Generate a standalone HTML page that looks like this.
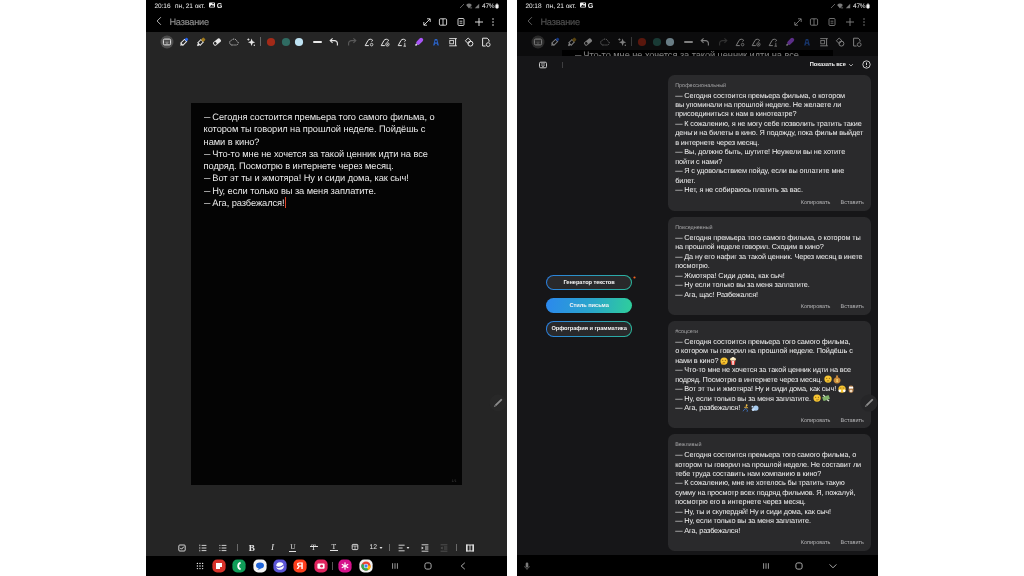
<!DOCTYPE html>
<html lang="ru"><head><meta charset="utf-8"><title>Samsung Notes</title>
<style>
html,body{margin:0;padding:0}
body{width:1024px;height:576px;background:#fff;position:relative;overflow:hidden;font-family:"Liberation Sans", sans-serif;-webkit-font-smoothing:antialiased;text-rendering:geometricPrecision}
.phone{position:absolute;top:0;width:360.8px;height:576px;background:#252525;overflow:hidden;will-change:transform}
.st{position:absolute;font-size:6.5px;line-height:9px;color:#f2f2f2;white-space:nowrap;letter-spacing:-0.03px}
.fm{position:absolute;font-size:8.2px;line-height:10px;color:#e4e4e4;white-space:nowrap}
.card{position:absolute;left:150.8px;width:203.7px;background:#2a2a2c;border-radius:6.5px}
.lbl{position:absolute;left:7.4px;top:8px;font-size:5.45px;line-height:7px;color:#a6a6a8;white-space:nowrap}
.ct{position:absolute;left:7.4px;top:15.9px;font-size:7.3px;line-height:9.45px;color:#f1f1f1;white-space:nowrap;letter-spacing:-0.115px}
.cb{position:absolute;bottom:3.6px;font-size:5.5px;line-height:8px;color:#b4b4b6;white-space:nowrap}
span.d{display:inline-block;transform:scaleX(0.68);transform-origin:0 50%;margin-right:-3px}
.em{display:inline-block;vertical-align:1.2px;margin:-3px 0.6px -3px 0.2px}
</style></head>
<body>
<div class="phone" style="left:146.2px">
<div style="position:absolute;left:0;top:0;width:361px;height:32px;background:#000"></div>
<div class="st" style="left:8.4px;top:1.7px;">20:16</div>
<div class="st" style="left:29.1px;top:1.7px;">пн, 21 окт.</div>
<svg style="position:absolute;left:62.00px;top:1.30px;overflow:visible" width="8" height="8" viewBox="-4.0 -4.0 8 8" ><rect x="-3" y="-2.6" width="6" height="5.2" rx="0.8" fill="#f2f2f2"/><path d="M-2.2 1.8 L-0.6 -0.2 L0.4 0.8 L1.2 0 L2.2 1.8Z" fill="#000"/><rect x="0.4" y="-1.8" width="1.6" height="0.9" fill="#000"/></svg>
<div class="st" style="left:70.8px;top:0.9px;font-size:7.2px;font-weight:bold">G</div>
<svg style="position:absolute;left:311.60px;top:1.70px;overflow:visible" width="8" height="8" viewBox="-4.0 -4.0 8 8" ><path d="M-2 2 L2 -2" stroke="#8a8a8a" stroke-width="0.7"/></svg>
<svg style="position:absolute;left:319.40px;top:1.70px;overflow:visible" width="8" height="8" viewBox="-4.0 -4.0 8 8" ><path d="M-2.9 -1 A4.2 4.2 0 0 1 2.9 -1 L0 2.4Z" fill="#7a7a7a"/><path d="M1.4 0.8V2.6M2.6 0.8V2.6" stroke="#7a7a7a" stroke-width="0.6"/></svg>
<svg style="position:absolute;left:326.60px;top:1.80px;overflow:visible" width="8" height="8" viewBox="-4.0 -4.0 8 8" ><path d="M-2.2 2.2 H2.2 V-2.2Z" fill="#7a7a7a"/></svg>
<div class="st" style="left:336px;top:1.8px;letter-spacing:-0.2px">47%</div>
<svg style="position:absolute;left:348.40px;top:1.60px;overflow:visible" width="6" height="8" viewBox="-3.0 -4.0 6 8" ><rect x="-1.6" y="-1.8" width="3.2" height="4.2" rx="0.8" fill="#f2f2f2"/><rect x="-0.8" y="-2.5" width="1.6" height="1.2" fill="#bdbdbd"/></svg>
<svg style="position:absolute;left:8.80px;top:16.30px;overflow:visible" width="8" height="10" viewBox="-4.0 -5.0 8 10" ><path d="M1.9 -3.8 L-1.9 0 L1.9 3.8" fill="none" stroke="#c4c4c4" stroke-width="0.9"/></svg>
<div style="position:absolute;left:23.4px;top:15.6px;font-size:9.2px;line-height:12px;color:#8b8b8b;white-space:nowrap;letter-spacing:-0.2px;-webkit-text-stroke:0.2px #8b8b8b">Название</div>
<svg style="position:absolute;left:275.60px;top:16.80px;overflow:visible" width="10" height="10" viewBox="-5.0 -5.0 10 10" ><path d="M-3 3 L3 -3M0 -3.2H3.2V0M0 3.2H-3.2V0" fill="none" stroke="#f0f0f0" stroke-width="0.85"/></svg>
<svg style="position:absolute;left:292.30px;top:16.80px;overflow:visible" width="10" height="10" viewBox="-5.0 -5.0 10 10" ><rect x="-3.6" y="-3.2" width="7.2" height="6.4" rx="1" fill="none" stroke="#f0f0f0" stroke-width="0.85"/><path d="M0 -3.2V3.2" stroke="#f0f0f0" stroke-width="0.85"/></svg>
<svg style="position:absolute;left:310.40px;top:16.80px;overflow:visible" width="10" height="10" viewBox="-5.0 -5.0 10 10" ><rect x="-3" y="-3.5" width="6" height="7" rx="1" fill="none" stroke="#f0f0f0" stroke-width="0.85"/><path d="M-1.4 -0.8H1.4M-1.4 1.2H1.4" stroke="#f0f0f0" stroke-width="0.8"/></svg>
<svg style="position:absolute;left:328.00px;top:16.80px;overflow:visible" width="10" height="10" viewBox="-5.0 -5.0 10 10" ><path d="M-4 0H4M0 -4V4" stroke="#f0f0f0" stroke-width="0.9"/></svg>
<svg style="position:absolute;left:345.40px;top:16.80px;overflow:visible" width="4" height="10" viewBox="-2.0 -5.0 4 10" ><circle cy="-3" r="0.75" fill="#f0f0f0"/><circle cy="0" r="0.75" fill="#f0f0f0"/><circle cy="3" r="0.75" fill="#f0f0f0"/></svg>
<svg style="position:absolute;left:14.00px;top:34.70px;overflow:visible" width="14" height="14" viewBox="-7.0 -7.0 14 14" ><circle r="6.5" fill="#4d4d4d"/><rect x="-3.6" y="-2.9" width="7.2" height="5.8" rx="1.2" fill="none" stroke="#e8e8e8" stroke-width="1"/><path d="M-1.6 0.2H1.6M-0.8 1.4H0.8" stroke="#aaa" stroke-width="0.7"/></svg>
<svg style="position:absolute;left:31.70px;top:35.70px;overflow:visible" width="12" height="12" viewBox="-6.0 -6.0 12 12" ><g transform="rotate(45)"><rect x="-1.5" y="-2.2" width="3" height="5.2" fill="none" stroke="#e8e8e8" stroke-width="1"/><path d="M-1.5 3 L0 5.4 L1.5 3Z" fill="#e8e8e8"/><rect x="-1.5" y="-5" width="3" height="2.8" rx="1" fill="#2563eb"/></g></svg>
<svg style="position:absolute;left:48.50px;top:35.70px;overflow:visible" width="12" height="12" viewBox="-6.0 -6.0 12 12" ><g transform="rotate(45)"><rect x="-1.7" y="-1.6" width="3.4" height="4.4" fill="none" stroke="#e8e8e8" stroke-width="1"/><path d="M-1.2 2.8 L-0.6 5.2 L0.9 5.2 L1.2 2.8Z" fill="#e8e8e8"/><rect x="-1.7" y="-5" width="3.4" height="3.6" rx="1" fill="#a07a1c"/></g></svg>
<svg style="position:absolute;left:65.20px;top:35.70px;overflow:visible" width="12" height="12" viewBox="-6.0 -6.0 12 12" ><g transform="rotate(-38)"><rect x="-4.2" y="-2.1" width="8.4" height="4.2" rx="1.3" fill="#e8e8e8"/><rect x="-3.4" y="-1.3" width="2.4" height="2.6" rx="0.8" fill="#252525"/></g></svg>
<svg style="position:absolute;left:82.00px;top:35.70px;overflow:visible" width="12" height="12" viewBox="-6.0 -6.0 12 12" ><path d="M-2.4 3 H2.4 A2 2 0 0 0 2.8 -0.9 A2.9 2.9 0 0 0 -2.2 -1.9 A2.5 2.5 0 0 0 -2.4 3Z" fill="none" stroke="#e8e8e8" stroke-width="0.85" stroke-dasharray="1.1 0.8"/></svg>
<svg style="position:absolute;left:98.70px;top:35.70px;overflow:visible" width="12" height="12" viewBox="-6.0 -6.0 12 12" ><path d="M0.6 -3.6 L1.6 -0.8 L4.2 0.3 L1.6 1.3 L0.6 4 L-0.4 1.3 L-3 0.3 L-0.4 -0.8Z" fill="#e8e8e8"/><path d="M-2.6 -3.6V-1.4M-3.7 -2.5H-1.5" stroke="#e8e8e8" stroke-width="0.8"/><circle cx="3.3" cy="3.3" r="0.7" fill="#e8e8e8"/></svg>
<div style="position:absolute;left:114.2px;top:37.2px;width:1px;height:9px;background:#666"></div>
<svg style="position:absolute;left:120.40px;top:36.70px;overflow:visible" width="10" height="10" viewBox="-5.0 -5.0 10 10" ><circle r="4.1" fill="#a32a18"/></svg>
<svg style="position:absolute;left:134.50px;top:36.70px;overflow:visible" width="10" height="10" viewBox="-5.0 -5.0 10 10" ><circle r="4.1" fill="#2f6b62"/></svg>
<svg style="position:absolute;left:148.20px;top:36.70px;overflow:visible" width="10" height="10" viewBox="-5.0 -5.0 10 10" ><circle r="4.1" fill="#bfe3f3"/></svg>
<div style="position:absolute;left:166.7px;top:40.6px;width:9.6px;height:2.2px;border-radius:1px;background:#e8e8e8"></div>
<svg style="position:absolute;left:182.40px;top:35.70px;overflow:visible" width="12" height="12" viewBox="-6.0 -6.0 12 12" ><path d="M-3.4 -1.4 H0.6 A2.8 2.8 0 0 1 3.4 1.4 V3.6" fill="none" stroke="#e8e8e8" stroke-width="1.1"/><path d="M-1.4 -3.6 L-3.8 -1.4 L-1.4 0.8" fill="none" stroke="#e8e8e8" stroke-width="1.1"/></svg>
<svg style="position:absolute;left:199.50px;top:35.70px;overflow:visible" width="12" height="12" viewBox="-6.0 -6.0 12 12" ><path d="M3.4 -1.4 H-0.6 A2.8 2.8 0 0 0 -3.4 1.4 V3.6" fill="none" stroke="#5a5a5a" stroke-width="1.1"/><path d="M1.4 -3.6 L3.8 -1.4 L1.4 0.8" fill="none" stroke="#5a5a5a" stroke-width="1.1"/></svg>
<svg style="position:absolute;left:217.00px;top:35.70px;overflow:visible" width="12" height="12" viewBox="-6.0 -6.0 12 12" ><path d="M-0.2 3.6 H-3.8 L-1 -1.6 A3 3 0 0 1 3.6 -1.8 L2.6 -0.4" fill="none" stroke="#e8e8e8" stroke-width="1" stroke-linejoin="round"/><circle cx="2.6" cy="2.6" r="1.3" fill="none" stroke="#e8e8e8" stroke-width="0.8"/></svg>
<svg style="position:absolute;left:233.30px;top:35.70px;overflow:visible" width="12" height="12" viewBox="-6.0 -6.0 12 12" ><path d="M-0.2 3.6 H-3.8 L-1 -1.6 A3 3 0 0 1 3.6 -1.8 L2.6 -0.4" fill="none" stroke="#e8e8e8" stroke-width="1" stroke-linejoin="round"/><circle cx="2.4" cy="2.4" r="1.7" fill="none" stroke="#e8e8e8" stroke-width="0.8"/><path d="M1.6 2.4H3.2M2.4 1.6V3.2" stroke="#e8e8e8" stroke-width="0.6"/></svg>
<svg style="position:absolute;left:250.30px;top:35.70px;overflow:visible" width="12" height="12" viewBox="-6.0 -6.0 12 12" ><path d="M-0.2 3.6 H-3.8 L-1 -1.6 A3 3 0 0 1 3.6 -1.8 L2.6 -0.4" fill="none" stroke="#e8e8e8" stroke-width="1" stroke-linejoin="round"/><path d="M2.8 0.8V4.2M1.4 4.2H4" stroke="#e8e8e8" stroke-width="0.8" fill="none"/></svg>
<svg style="position:absolute;left:267.00px;top:35.70px;overflow:visible" width="12" height="12" viewBox="-6.0 -6.0 12 12" ><g transform="rotate(45)"><rect x="-2" y="-5" width="4" height="8" rx="1.8" fill="#a855f7"/><path d="M-1 3 L-0.6 5 L0.6 5 L1 3Z" fill="#ddd"/></g></svg>
<svg style="position:absolute;left:283.70px;top:35.70px;overflow:visible" width="12" height="12" viewBox="-6.0 -6.0 12 12" ><path d="M-2.9 3.6 L-1.2 -3 H1.2 L2.9 3.6 H1.3 L0.9 1.8 H-0.9 L-1.3 3.6Z" fill="#2b62c4"/><circle cy="-0.4" r="1.1" fill="#1a2a48"/><path d="M-1.6 3.6H1.6" stroke="#1a2a48" stroke-width="0.8"/></svg>
<svg style="position:absolute;left:300.80px;top:35.70px;overflow:visible" width="12" height="12" viewBox="-6.0 -6.0 12 12" ><path d="M-3.8 -3.4H3.8M-3.8 3.8H3.8" stroke="#e8e8e8" stroke-width="0.9"/><rect x="-3.2" y="-1.6" width="3.6" height="3.4" fill="none" stroke="#e8e8e8" stroke-width="0.8"/><path d="M2.6 -3.4V3.8" stroke="#e8e8e8" stroke-width="1"/></svg>
<svg style="position:absolute;left:317.10px;top:35.70px;overflow:visible" width="12" height="12" viewBox="-6.0 -6.0 12 12" ><path d="M-0.8 -4 L2 -1.2 L-0.8 1.6 L-3.6 -1.2Z" fill="none" stroke="#e8e8e8" stroke-width="1"/><circle cx="1.4" cy="1.6" r="2.5" fill="none" stroke="#e8e8e8" stroke-width="1"/></svg>
<svg style="position:absolute;left:333.80px;top:35.70px;overflow:visible" width="12" height="12" viewBox="-6.0 -6.0 12 12" ><path d="M-0.4 4 H-3.4 V-3.8 H1.2 L3 -2 V-0.2" fill="none" stroke="#e8e8e8" stroke-width="1"/><circle cx="2.2" cy="2.6" r="1.9" fill="none" stroke="#e8e8e8" stroke-width="0.9"/></svg>
<div style="position:absolute;left:45px;top:103px;width:270.8px;height:381.8px;background:#040404"></div>
<div id="note" style="position:absolute;left:57.6px;top:111px;font-size:9.3px;line-height:12.27px;color:#e9e9e9;white-space:nowrap;letter-spacing:-0.08px">
<span class="nl" id="n0"><span class="d">—</span> Сегодня состоится премьера того самого фильма, о</span><br>
<span class="nl" id="n1">котором ты говорил на прошлой неделе. Пойдёшь с</span><br>
<span class="nl" id="n2">нами в кино?</span><br>
<span class="nl" id="n3"><span class="d">—</span> Что-то мне не хочется за такой ценник идти на все</span><br>
<span class="nl" id="n4">подряд. Посмотрю в интернете через месяц.</span><br>
<span class="nl" id="n5"><span class="d">—</span> Вот эт ты и жмотяра! Ну и сиди дома, как сыч!</span><br>
<span class="nl" id="n6"><span class="d">—</span> Ну, если только вы за меня заплатите.</span><br>
<span class="nl" id="n7"><span class="d">—</span> Ага, разбежался!</span><span style="display:inline-block;width:1px;height:11px;background:#e0452c;vertical-align:-2px;margin-left:0.5px"></span><br>
</div>
<div style="position:absolute;left:305.5px;top:479px;font-size:3.6px;line-height:5px;color:#444">1/1</div>
<svg style="position:absolute;left:343.30px;top:393.80px;overflow:visible" width="18" height="18" viewBox="-9.0 -9.0 18 18" ><circle r="8.5" fill="#282828"/><g transform="rotate(45)"><rect x="-0.9" y="-5.4" width="1.8" height="9" rx="0.5" fill="#8d8d8d"/><path d="M-0.9 3.8 L0 5.8 L0.9 3.8Z" fill="#8d8d8d"/></g></svg>
<svg style="position:absolute;left:30.90px;top:542.60px;overflow:visible" width="10" height="10" viewBox="-5.0 -5.0 10 10" ><rect x="-3.2" y="-3" width="6.4" height="6" rx="1" fill="none" stroke="#e4e4e4" stroke-width="0.9"/><path d="M-1.7 -0.1 L-0.5 1.2 L1.9 -1.4" fill="none" stroke="#e4e4e4" stroke-width="1"/></svg>
<svg style="position:absolute;left:51.70px;top:542.60px;overflow:visible" width="10" height="10" viewBox="-5.0 -5.0 10 10" ><path d="M-1.4 -2.6H3.4M-1.4 0H3.4M-1.4 2.6H3.4" stroke="#e4e4e4" stroke-width="0.9"/><path d="M-3.2 -3.4V-1.8M-3.2 -0.8V0.8M-3.2 1.8V3.4" stroke="#e4e4e4" stroke-width="0.8"/></svg>
<svg style="position:absolute;left:72.00px;top:542.60px;overflow:visible" width="10" height="10" viewBox="-5.0 -5.0 10 10" ><path d="M-1.4 -2.6H3.4M-1.4 0H3.4M-1.4 2.6H3.4" stroke="#e4e4e4" stroke-width="0.9"/><path d="M-3.6 -2.6H-2.6M-3.6 0H-2.6M-3.6 2.6H-2.6" stroke="#e4e4e4" stroke-width="1"/></svg>
<div style="position:absolute;left:91px;top:544.0px;width:0.8px;height:7.2px;background:#6a6a6a"></div>
<div class="fm" style="left:95.8px;top:542.7px;width:20px;text-align:center;font-family:'Liberation Serif',serif;font-weight:bold;font-size:9.2px">B</div>
<div class="fm" style="left:116.5px;top:542.4px;width:20px;text-align:center;font-family:'Liberation Serif',serif;font-style:italic;font-size:9.2px">I</div>
<div class="fm" style="left:136.8px;top:542.4px;width:20px;text-align:center;font-family:'Liberation Serif',serif;font-size:7.3px">U</div>
<div style="position:absolute;left:143.4px;top:550.5px;width:7px;height:0.9px;background:#e4e4e4"></div>
<div class="fm" style="left:157.5px;top:543.2px;width:20px;text-align:center;font-family:'Liberation Serif',serif;font-size:8px">T</div>
<div style="position:absolute;left:163.6px;top:546.2px;width:8px;height:0.8px;background:#e4e4e4"></div>
<div class="fm" style="left:177.9px;top:541.5px;width:20px;text-align:center;font-family:'Liberation Serif',serif;font-size:7.6px">T</div>
<div style="position:absolute;left:184.2px;top:550.3000000000001px;width:7.4px;height:0.9px;background:#e4e4e4"></div>
<svg style="position:absolute;left:203.70px;top:542.00px;overflow:visible" width="10" height="10" viewBox="-5.0 -5.0 10 10" ><rect x="-2.8" y="-2.6" width="5.6" height="5.2" rx="0.8" fill="none" stroke="#e4e4e4" stroke-width="0.9"/><path d="M-2.8 -1H2.8M0 -1V2.6" stroke="#e4e4e4" stroke-width="0.7"/></svg>
<div class="fm" style="left:223.6px;top:543.2px;font-size:6.8px;letter-spacing:-0.2px">12</div>
<svg style="position:absolute;left:233.30px;top:546.00px;overflow:visible" width="4" height="4" viewBox="-2.0 -2.0 4 4" ><path d="M-1.5 -1H1.5L0 1Z" fill="#e4e4e4"/></svg>
<div style="position:absolute;left:243px;top:544.0px;width:0.8px;height:7.2px;background:#6a6a6a"></div>
<svg style="position:absolute;left:251.30px;top:542.60px;overflow:visible" width="10" height="10" viewBox="-5.0 -5.0 10 10" ><path d="M-3.4 -2.8H2.6M-3.4 0H0.6M-3.4 2.8H2.6" stroke="#e4e4e4" stroke-width="0.9"/></svg>
<svg style="position:absolute;left:260.30px;top:545.80px;overflow:visible" width="4" height="4" viewBox="-2.0 -2.0 4 4" ><path d="M-1.4 -0.9H1.4L0 0.9Z" fill="#e4e4e4"/></svg>
<svg style="position:absolute;left:273.60px;top:542.60px;overflow:visible" width="10" height="10" viewBox="-5.0 -5.0 10 10" ><path d="M-3.4 -3.2H3.4M0 -1H3.4M0 1H3.4M-3.4 3.2H3.4" stroke="#e4e4e4" stroke-width="0.9"/><path d="M-3.4 -1.6L-1.4 0L-3.4 1.6Z" fill="#e4e4e4"/></svg>
<svg style="position:absolute;left:292.50px;top:542.60px;overflow:visible" width="10" height="10" viewBox="-5.0 -5.0 10 10" ><path d="M-3.4 -3.2H3.4M0 -1H3.4M0 1H3.4M-3.4 3.2H3.4" stroke="#555" stroke-width="0.9"/><path d="M-1.4 -1.6L-3.4 0L-1.4 1.6Z" fill="#555"/></svg>
<div style="position:absolute;left:309.8px;top:544.0px;width:0.8px;height:7.2px;background:#6a6a6a"></div>
<svg style="position:absolute;left:319.40px;top:542.60px;overflow:visible" width="10" height="10" viewBox="-5.0 -5.0 10 10" ><rect x="-3.2" y="-3" width="6.4" height="6" fill="none" stroke="#e4e4e4" stroke-width="1"/><path d="M0 -3V3" stroke="#e4e4e4" stroke-width="0.9"/><path d="M-3.2 -3.4V3.4M3.2 -3.4V3.4" stroke="#e4e4e4" stroke-width="1.3"/></svg>
<div style="position:absolute;left:0;top:556.3px;width:361px;height:20px;background:#000"></div>
<svg style="position:absolute;left:50.40px;top:562.00px;overflow:visible" width="8" height="8" viewBox="-4.0 -4.0 8 8" ><circle cx="-2.6" cy="-2.6" r="0.72" fill="#ececec"/><circle cx="-2.6" cy="0" r="0.72" fill="#ececec"/><circle cx="-2.6" cy="2.6" r="0.72" fill="#ececec"/><circle cx="0" cy="-2.6" r="0.72" fill="#ececec"/><circle cx="0" cy="0" r="0.72" fill="#ececec"/><circle cx="0" cy="2.6" r="0.72" fill="#ececec"/><circle cx="2.6" cy="-2.6" r="0.72" fill="#ececec"/><circle cx="2.6" cy="0" r="0.72" fill="#ececec"/><circle cx="2.6" cy="2.6" r="0.72" fill="#ececec"/></svg>
<svg style="position:absolute;left:65.60px;top:559.00px;overflow:visible" width="14" height="14" viewBox="-7.0 -7.0 14 14" ><rect x="-6.6" y="-6.4" width="13.2" height="12.8" rx="4.7" fill="#d8322a"/><path d="M-3 -3H3V1H1V3H-3Z" fill="#fff"/></svg>
<svg style="position:absolute;left:86.20px;top:559.00px;overflow:visible" width="14" height="14" viewBox="-7.0 -7.0 14 14" ><rect x="-6.6" y="-6.4" width="13.2" height="12.8" rx="4.7" fill="#0f9d58"/><path d="M1.6 -3.4 A3.6 3.6 0 0 0 1.6 3.4" fill="none" stroke="#fff" stroke-width="1.8"/></svg>
<svg style="position:absolute;left:106.60px;top:559.00px;overflow:visible" width="14" height="14" viewBox="-7.0 -7.0 14 14" ><rect x="-6.6" y="-6.4" width="13.2" height="12.8" rx="4.7" fill="#f4f4f4"/><ellipse cx="0" cy="-0.4" rx="4" ry="3" fill="#1d63d8"/><path d="M-1 2 L-2.6 4 L1.4 2.4Z" fill="#1d63d8"/></svg>
<svg style="position:absolute;left:126.70px;top:559.00px;overflow:visible" width="14" height="14" viewBox="-7.0 -7.0 14 14" ><rect x="-6.6" y="-6.4" width="13.2" height="12.8" rx="4.7" fill="#5b55d6"/><circle r="3.8" fill="#fff"/><path d="M-4 0.6 Q0 2.8 4 -1.4" fill="none" stroke="#5b55d6" stroke-width="1.1"/></svg>
<svg style="position:absolute;left:147.00px;top:559.00px;overflow:visible" width="14" height="14" viewBox="-7.0 -7.0 14 14" ><rect x="-6.6" y="-6.4" width="13.2" height="12.8" rx="4.7" fill="#fc3f1d"/><text x="0" y="3.4" font-size="9.6" font-weight="bold" fill="#fff" text-anchor="middle" font-family='"Liberation Sans", sans-serif'>Я</text></svg>
<svg style="position:absolute;left:167.70px;top:559.00px;overflow:visible" width="14" height="14" viewBox="-7.0 -7.0 14 14" ><rect x="-6.6" y="-6.4" width="13.2" height="12.8" rx="4.7" fill="#e0245e"/><rect x="-3.6" y="-2.6" width="7.2" height="5.4" rx="1" fill="#fff"/><circle cx="0.6" cy="0.2" r="1.4" fill="#e0245e"/></svg>
<div style="position:absolute;left:186.2px;top:561.6px;width:0.8px;height:8.8px;background:#555"></div>
<svg style="position:absolute;left:192.40px;top:559.00px;overflow:visible" width="14" height="14" viewBox="-7.0 -7.0 14 14" ><rect x="-6.6" y="-6.4" width="13.2" height="12.8" rx="4.7" fill="#d6128c"/><rect x="-0.6" y="-3.8" width="1.2" height="7.6" rx="0.6" fill="#fff" transform="rotate(0)"/><rect x="-0.6" y="-3.8" width="1.2" height="7.6" rx="0.6" fill="#fff" transform="rotate(60)"/><rect x="-0.6" y="-3.8" width="1.2" height="7.6" rx="0.6" fill="#fff" transform="rotate(120)"/></svg>
<svg style="position:absolute;left:212.80px;top:559.00px;overflow:visible" width="14" height="14" viewBox="-7.0 -7.0 14 14" ><rect x="-6.6" y="-6.4" width="13.2" height="12.8" rx="4.7" fill="#f2f2f2"/><circle r="4.6" fill="#ea4335"/><path d="M0 0 L-4 -2.3 A4.6 4.6 0 0 0 2.3 4Z" fill="#34a853"/><path d="M0 0 L2.3 4 A4.6 4.6 0 0 0 4.6 -0.6 L0 -0.6Z" fill="#fbbc05"/><circle r="2.2" fill="#fff"/><circle r="1.7" fill="#4285f4"/></svg>
<svg style="position:absolute;left:244.60px;top:562.00px;overflow:visible" width="8" height="8" viewBox="-4.0 -4.0 8 8" ><path d="M-2.4 -2.8V2.8M0 -2.8V2.8M2.4 -2.8V2.8" stroke="#c8c8c8" stroke-width="0.75"/></svg>
<svg style="position:absolute;left:278.30px;top:562.00px;overflow:visible" width="8" height="8" viewBox="-4.0 -4.0 8 8" ><rect x="-3.1" y="-3.1" width="6.2" height="6.2" rx="1.9" fill="none" stroke="#c8c8c8" stroke-width="0.85"/></svg>
<svg style="position:absolute;left:312.70px;top:562.00px;overflow:visible" width="8" height="8" viewBox="-4.0 -4.0 8 8" ><path d="M1.8 -3.2 L-1.8 0 L1.8 3.2" fill="none" stroke="#c8c8c8" stroke-width="0.85"/></svg>
</div>
<div class="phone" style="left:517.2px;background:#161618">
<div style="position:absolute;left:0;top:0;width:361px;height:32px;background:#000"></div>
<div class="st" style="left:8.4px;top:1.7px;">20:18</div>
<div class="st" style="left:29.1px;top:1.7px;">пн, 21 окт.</div>
<svg style="position:absolute;left:62.00px;top:1.30px;overflow:visible" width="8" height="8" viewBox="-4.0 -4.0 8 8" ><rect x="-3" y="-2.6" width="6" height="5.2" rx="0.8" fill="#f2f2f2"/><path d="M-2.2 1.8 L-0.6 -0.2 L0.4 0.8 L1.2 0 L2.2 1.8Z" fill="#000"/><rect x="0.4" y="-1.8" width="1.6" height="0.9" fill="#000"/></svg>
<div class="st" style="left:70.8px;top:0.9px;font-size:7.2px;font-weight:bold">G</div>
<svg style="position:absolute;left:311.60px;top:1.70px;overflow:visible" width="8" height="8" viewBox="-4.0 -4.0 8 8" ><path d="M-2 2 L2 -2" stroke="#8a8a8a" stroke-width="0.7"/></svg>
<svg style="position:absolute;left:319.40px;top:1.70px;overflow:visible" width="8" height="8" viewBox="-4.0 -4.0 8 8" ><path d="M-2.9 -1 A4.2 4.2 0 0 1 2.9 -1 L0 2.4Z" fill="#7a7a7a"/><path d="M1.4 0.8V2.6M2.6 0.8V2.6" stroke="#7a7a7a" stroke-width="0.6"/></svg>
<svg style="position:absolute;left:326.60px;top:1.80px;overflow:visible" width="8" height="8" viewBox="-4.0 -4.0 8 8" ><path d="M-2.2 2.2 H2.2 V-2.2Z" fill="#7a7a7a"/></svg>
<div class="st" style="left:336px;top:1.8px;letter-spacing:-0.2px">47%</div>
<svg style="position:absolute;left:348.40px;top:1.60px;overflow:visible" width="6" height="8" viewBox="-3.0 -4.0 6 8" ><rect x="-1.6" y="-1.8" width="3.2" height="4.2" rx="0.8" fill="#f2f2f2"/><rect x="-0.8" y="-2.5" width="1.6" height="1.2" fill="#bdbdbd"/></svg>
<svg style="position:absolute;left:8.80px;top:16.30px;overflow:visible" width="8" height="10" viewBox="-4.0 -5.0 8 10" ><path d="M1.9 -3.8 L-1.9 0 L1.9 3.8" fill="none" stroke="#c4c4c4" stroke-width="0.9"/></svg>
<div style="position:absolute;left:23.4px;top:15.6px;font-size:9.2px;line-height:12px;color:#8b8b8b;white-space:nowrap;letter-spacing:-0.2px;-webkit-text-stroke:0.2px #8b8b8b">Название</div>
<svg style="position:absolute;left:275.60px;top:16.80px;overflow:visible" width="10" height="10" viewBox="-5.0 -5.0 10 10" ><path d="M-3 3 L3 -3M0 -3.2H3.2V0M0 3.2H-3.2V0" fill="none" stroke="#f0f0f0" stroke-width="0.85"/></svg>
<svg style="position:absolute;left:292.30px;top:16.80px;overflow:visible" width="10" height="10" viewBox="-5.0 -5.0 10 10" ><rect x="-3.6" y="-3.2" width="7.2" height="6.4" rx="1" fill="none" stroke="#f0f0f0" stroke-width="0.85"/><path d="M0 -3.2V3.2" stroke="#f0f0f0" stroke-width="0.85"/></svg>
<svg style="position:absolute;left:310.40px;top:16.80px;overflow:visible" width="10" height="10" viewBox="-5.0 -5.0 10 10" ><rect x="-3" y="-3.5" width="6" height="7" rx="1" fill="none" stroke="#f0f0f0" stroke-width="0.85"/><path d="M-1.4 -0.8H1.4M-1.4 1.2H1.4" stroke="#f0f0f0" stroke-width="0.8"/></svg>
<svg style="position:absolute;left:328.00px;top:16.80px;overflow:visible" width="10" height="10" viewBox="-5.0 -5.0 10 10" ><path d="M-4 0H4M0 -4V4" stroke="#f0f0f0" stroke-width="0.9"/></svg>
<svg style="position:absolute;left:345.40px;top:16.80px;overflow:visible" width="4" height="10" viewBox="-2.0 -5.0 4 10" ><circle cy="-3" r="0.75" fill="#f0f0f0"/><circle cy="0" r="0.75" fill="#f0f0f0"/><circle cy="3" r="0.75" fill="#f0f0f0"/></svg>
<svg style="position:absolute;left:14.00px;top:34.70px;overflow:visible" width="14" height="14" viewBox="-7.0 -7.0 14 14" ><circle r="6.5" fill="#4d4d4d"/><rect x="-3.6" y="-2.9" width="7.2" height="5.8" rx="1.2" fill="none" stroke="#e8e8e8" stroke-width="1"/><path d="M-1.6 0.2H1.6M-0.8 1.4H0.8" stroke="#aaa" stroke-width="0.7"/></svg>
<svg style="position:absolute;left:31.70px;top:35.70px;overflow:visible" width="12" height="12" viewBox="-6.0 -6.0 12 12" ><g transform="rotate(45)"><rect x="-1.5" y="-2.2" width="3" height="5.2" fill="none" stroke="#e8e8e8" stroke-width="1"/><path d="M-1.5 3 L0 5.4 L1.5 3Z" fill="#e8e8e8"/><rect x="-1.5" y="-5" width="3" height="2.8" rx="1" fill="#2563eb"/></g></svg>
<svg style="position:absolute;left:48.50px;top:35.70px;overflow:visible" width="12" height="12" viewBox="-6.0 -6.0 12 12" ><g transform="rotate(45)"><rect x="-1.7" y="-1.6" width="3.4" height="4.4" fill="none" stroke="#e8e8e8" stroke-width="1"/><path d="M-1.2 2.8 L-0.6 5.2 L0.9 5.2 L1.2 2.8Z" fill="#e8e8e8"/><rect x="-1.7" y="-5" width="3.4" height="3.6" rx="1" fill="#a07a1c"/></g></svg>
<svg style="position:absolute;left:65.20px;top:35.70px;overflow:visible" width="12" height="12" viewBox="-6.0 -6.0 12 12" ><g transform="rotate(-38)"><rect x="-4.2" y="-2.1" width="8.4" height="4.2" rx="1.3" fill="#e8e8e8"/><rect x="-3.4" y="-1.3" width="2.4" height="2.6" rx="0.8" fill="#252525"/></g></svg>
<svg style="position:absolute;left:82.00px;top:35.70px;overflow:visible" width="12" height="12" viewBox="-6.0 -6.0 12 12" ><path d="M-2.4 3 H2.4 A2 2 0 0 0 2.8 -0.9 A2.9 2.9 0 0 0 -2.2 -1.9 A2.5 2.5 0 0 0 -2.4 3Z" fill="none" stroke="#e8e8e8" stroke-width="0.85" stroke-dasharray="1.1 0.8"/></svg>
<svg style="position:absolute;left:98.70px;top:35.70px;overflow:visible" width="12" height="12" viewBox="-6.0 -6.0 12 12" ><path d="M0.6 -3.6 L1.6 -0.8 L4.2 0.3 L1.6 1.3 L0.6 4 L-0.4 1.3 L-3 0.3 L-0.4 -0.8Z" fill="#e8e8e8"/><path d="M-2.6 -3.6V-1.4M-3.7 -2.5H-1.5" stroke="#e8e8e8" stroke-width="0.8"/><circle cx="3.3" cy="3.3" r="0.7" fill="#e8e8e8"/></svg>
<div style="position:absolute;left:114.2px;top:37.2px;width:1px;height:9px;background:#666"></div>
<svg style="position:absolute;left:120.40px;top:36.70px;overflow:visible" width="10" height="10" viewBox="-5.0 -5.0 10 10" ><circle r="4.1" fill="#a32a18"/></svg>
<svg style="position:absolute;left:134.50px;top:36.70px;overflow:visible" width="10" height="10" viewBox="-5.0 -5.0 10 10" ><circle r="4.1" fill="#2f6b62"/></svg>
<svg style="position:absolute;left:148.20px;top:36.70px;overflow:visible" width="10" height="10" viewBox="-5.0 -5.0 10 10" ><circle r="4.1" fill="#bfe3f3"/></svg>
<div style="position:absolute;left:166.7px;top:40.6px;width:9.6px;height:2.2px;border-radius:1px;background:#e8e8e8"></div>
<svg style="position:absolute;left:182.40px;top:35.70px;overflow:visible" width="12" height="12" viewBox="-6.0 -6.0 12 12" ><path d="M-3.4 -1.4 H0.6 A2.8 2.8 0 0 1 3.4 1.4 V3.6" fill="none" stroke="#e8e8e8" stroke-width="1.1"/><path d="M-1.4 -3.6 L-3.8 -1.4 L-1.4 0.8" fill="none" stroke="#e8e8e8" stroke-width="1.1"/></svg>
<svg style="position:absolute;left:199.50px;top:35.70px;overflow:visible" width="12" height="12" viewBox="-6.0 -6.0 12 12" ><path d="M3.4 -1.4 H-0.6 A2.8 2.8 0 0 0 -3.4 1.4 V3.6" fill="none" stroke="#5a5a5a" stroke-width="1.1"/><path d="M1.4 -3.6 L3.8 -1.4 L1.4 0.8" fill="none" stroke="#5a5a5a" stroke-width="1.1"/></svg>
<svg style="position:absolute;left:217.00px;top:35.70px;overflow:visible" width="12" height="12" viewBox="-6.0 -6.0 12 12" ><path d="M-0.2 3.6 H-3.8 L-1 -1.6 A3 3 0 0 1 3.6 -1.8 L2.6 -0.4" fill="none" stroke="#e8e8e8" stroke-width="1" stroke-linejoin="round"/><circle cx="2.6" cy="2.6" r="1.3" fill="none" stroke="#e8e8e8" stroke-width="0.8"/></svg>
<svg style="position:absolute;left:233.30px;top:35.70px;overflow:visible" width="12" height="12" viewBox="-6.0 -6.0 12 12" ><path d="M-0.2 3.6 H-3.8 L-1 -1.6 A3 3 0 0 1 3.6 -1.8 L2.6 -0.4" fill="none" stroke="#e8e8e8" stroke-width="1" stroke-linejoin="round"/><circle cx="2.4" cy="2.4" r="1.7" fill="none" stroke="#e8e8e8" stroke-width="0.8"/><path d="M1.6 2.4H3.2M2.4 1.6V3.2" stroke="#e8e8e8" stroke-width="0.6"/></svg>
<svg style="position:absolute;left:250.30px;top:35.70px;overflow:visible" width="12" height="12" viewBox="-6.0 -6.0 12 12" ><path d="M-0.2 3.6 H-3.8 L-1 -1.6 A3 3 0 0 1 3.6 -1.8 L2.6 -0.4" fill="none" stroke="#e8e8e8" stroke-width="1" stroke-linejoin="round"/><path d="M2.8 0.8V4.2M1.4 4.2H4" stroke="#e8e8e8" stroke-width="0.8" fill="none"/></svg>
<svg style="position:absolute;left:267.00px;top:35.70px;overflow:visible" width="12" height="12" viewBox="-6.0 -6.0 12 12" ><g transform="rotate(45)"><rect x="-2" y="-5" width="4" height="8" rx="1.8" fill="#a855f7"/><path d="M-1 3 L-0.6 5 L0.6 5 L1 3Z" fill="#ddd"/></g></svg>
<svg style="position:absolute;left:283.70px;top:35.70px;overflow:visible" width="12" height="12" viewBox="-6.0 -6.0 12 12" ><path d="M-2.9 3.6 L-1.2 -3 H1.2 L2.9 3.6 H1.3 L0.9 1.8 H-0.9 L-1.3 3.6Z" fill="#2b62c4"/><circle cy="-0.4" r="1.1" fill="#1a2a48"/><path d="M-1.6 3.6H1.6" stroke="#1a2a48" stroke-width="0.8"/></svg>
<svg style="position:absolute;left:300.80px;top:35.70px;overflow:visible" width="12" height="12" viewBox="-6.0 -6.0 12 12" ><path d="M-3.8 -3.4H3.8M-3.8 3.8H3.8" stroke="#e8e8e8" stroke-width="0.9"/><rect x="-3.2" y="-1.6" width="3.6" height="3.4" fill="none" stroke="#e8e8e8" stroke-width="0.8"/><path d="M2.6 -3.4V3.8" stroke="#e8e8e8" stroke-width="1"/></svg>
<svg style="position:absolute;left:317.10px;top:35.70px;overflow:visible" width="12" height="12" viewBox="-6.0 -6.0 12 12" ><path d="M-0.8 -4 L2 -1.2 L-0.8 1.6 L-3.6 -1.2Z" fill="none" stroke="#e8e8e8" stroke-width="1"/><circle cx="1.4" cy="1.6" r="2.5" fill="none" stroke="#e8e8e8" stroke-width="1"/></svg>
<svg style="position:absolute;left:333.80px;top:35.70px;overflow:visible" width="12" height="12" viewBox="-6.0 -6.0 12 12" ><path d="M-0.4 4 H-3.4 V-3.8 H1.2 L3 -2 V-0.2" fill="none" stroke="#e8e8e8" stroke-width="1"/><circle cx="2.2" cy="2.6" r="1.9" fill="none" stroke="#e8e8e8" stroke-width="0.9"/></svg>
<div style="position:absolute;left:45px;top:49.8px;width:270.8px;height:6.2px;background:#000;overflow:hidden"><div style="position:absolute;left:12.6px;top:-0.7px;font-size:9.3px;line-height:12.27px;color:#e9e9e9;white-space:nowrap;letter-spacing:-0.08px" id="strip"><span class="d">—</span> Что-то мне не хочется за такой ценник идти на все</div></div>
<div style="position:absolute;left:0;top:11px;width:361px;height:45px;background:rgba(0,0,0,0.45)"></div>
<div style="position:absolute;left:0;top:55.8px;width:361px;height:500px;background:#161618"></div>
<svg style="position:absolute;left:21.00px;top:60.70px;overflow:visible" width="10" height="8" viewBox="-5.0 -4.0 10 8" ><rect x="-3.5" y="-2.8" width="7" height="5.6" rx="1.2" fill="none" stroke="#dcdcdc" stroke-width="0.9"/><path d="M-2 -1.2H2M-2 0.2H2M-1 1.5H1" stroke="#dcdcdc" stroke-width="0.6"/></svg>
<div style="position:absolute;left:45.4px;top:61.8px;width:1px;height:5.8px;background:#3e3e40"></div>
<div id="showall" style="position:absolute;left:292.8px;top:61.1px;font-size:5.7px;line-height:8px;font-weight:bold;color:#f0f0f0;white-space:nowrap;letter-spacing:-0.1px">Показать все</div>
<svg style="position:absolute;left:331.30px;top:62.90px;overflow:visible" width="6" height="4" viewBox="-3.0 -2.0 6 4" ><path d="M-1.9 -0.9 L0 1 L1.9 -0.9" fill="none" stroke="#e0e0e0" stroke-width="0.7"/></svg>
<svg style="position:absolute;left:344.70px;top:60.40px;overflow:visible" width="9" height="9" viewBox="-4.5 -4.5 9 9" ><circle r="3.7" fill="none" stroke="#f0f0f0" stroke-width="0.8"/><path d="M0 -2V0.6" stroke="#f0f0f0" stroke-width="0.9"/><circle cy="1.9" r="0.5" fill="#f0f0f0"/></svg>
<div style="position:absolute;left:29px;top:275px;width:86.2px;height:15.100000000000023px;box-sizing:border-box;border-radius:7.550000000000011px;background:linear-gradient(#29292b,#29292b) padding-box,linear-gradient(100deg,#2b7fe0,#2cb59a) border-box;border:1px solid transparent;display:flex;align-items:center;justify-content:center;font-size:5.7px;font-weight:bold;color:#f4f4f4;white-space:nowrap;letter-spacing:-0.05px"><span id="b1">Генератор текстов</span></div>
<svg style="position:absolute;left:115.50px;top:275.50px;overflow:visible" width="3" height="3" viewBox="-1.5 -1.5 3 3" ><circle r="1.1" fill="#f0641e"/></svg>
<div style="position:absolute;left:29px;top:298.4px;width:86.2px;height:15.100000000000023px;box-sizing:border-box;border-radius:7.550000000000011px;background:linear-gradient(100deg,#2b88ee 0%,#2aa7c9 55%,#2fcf9a 100%);display:flex;align-items:center;justify-content:center;font-size:5.7px;font-weight:bold;color:#f4f4f4;white-space:nowrap;letter-spacing:-0.05px"><span id="b2">Стиль письма</span></div>
<div style="position:absolute;left:29px;top:321.4px;width:86.2px;height:15.200000000000045px;box-sizing:border-box;border-radius:7.600000000000023px;background:linear-gradient(#29292b,#29292b) padding-box,linear-gradient(100deg,#2b7fe0,#2cb59a) border-box;border:1px solid transparent;display:flex;align-items:center;justify-content:center;font-size:5.7px;font-weight:bold;color:#f4f4f4;white-space:nowrap;letter-spacing:-0.05px"><span id="b3">Орфография и грамматика</span></div>
<div class="card" style="top:74.7px;height:135.9px">
<div class="lbl" id="l0">Профессиональный</div>
<div class="ct" id="c0">
<span id="c0_0">— Сегодня состоится премьера фильма, о котором</span><br>
<span id="c0_1">вы упоминали на прошлой неделе. Не желаете ли</span><br>
<span id="c0_2">присоединиться к нам в кинотеатре?</span><br>
<span id="c0_3">— К сожалению, я не могу себе позволить тратить такие</span><br>
<span id="c0_4">деньги на билеты в кино. Я подожду, пока фильм выйдет</span><br>
<span id="c0_5">в интернете через месяц.</span><br>
<span id="c0_6">— Вы, должно быть, шутите! Неужели вы не хотите</span><br>
<span id="c0_7">пойти с нами?</span><br>
<span id="c0_8">— Я с удовольствием пойду, если вы оплатите мне</span><br>
<span id="c0_9">билет.</span><br>
<span id="c0_10">— Нет, я не собираюсь платить за вас.</span><br>
</div>
<div class="cb" style="left:133px" id="cp0">Копировать</div><div class="cb" style="left:172.8px" id="ps0">Вставить</div>
</div>
<div class="card" style="top:216.9px;height:97.9px">
<div class="lbl" id="l1">Повседневный</div>
<div class="ct" id="c1">
<span id="c1_0">— Сегодня премьера того самого фильма, о котором ты</span><br>
<span id="c1_1">на прошлой неделе говорил. Сходим в кино?</span><br>
<span id="c1_2">— Да ну его нафиг за такой ценник. Через месяц в инете</span><br>
<span id="c1_3">посмотрю.</span><br>
<span id="c1_4">— Жмотяра! Сиди дома, как сыч!</span><br>
<span id="c1_5">— Ну если только вы за меня заплатите.</span><br>
<span id="c1_6">— Ага, щас! Разбежался!</span><br>
</div>
<div class="cb" style="left:133px" id="cp1">Копировать</div><div class="cb" style="left:172.8px" id="ps1">Вставить</div>
</div>
<div class="card" style="top:321.0px;height:107.2px">
<div class="lbl" id="l2">#соцсети</div>
<div class="ct" id="c2">
<span id="c2_0">— Сегодня состоится премьера того самого фильма,</span><br>
<span id="c2_1">о котором ты говорил на прошлой неделе. Пойдёшь с</span><br>
<span id="c2_2">нами в кино? <svg class="em" role="img" aria-label="🤔" width="8.1" height="8.1" viewBox="-4 -4 8 8"><circle r="3.6" fill="#f7c531"/><circle cx="-1.3" cy="-0.8" r="0.55" fill="#6b4a12"/><circle cx="1.3" cy="-0.8" r="0.55" fill="#6b4a12"/><path d="M-1.2 1.6H1" stroke="#6b4a12" stroke-width="0.6"/><path d="M-2.6 3.2 Q-1 1.6 0.4 3" stroke="#e8a21c" stroke-width="1.2" fill="none"/></svg><svg class="em" role="img" aria-label="🍿" width="8.1" height="8.1" viewBox="-4 -4 8 8"><path d="M-2.4 -0.6 L-1.6 3.8 H1.6 L2.4 -0.6Z" fill="#e9473f"/><path d="M-0.8 -0.6 L-0.5 3.8 H0.5 L0.8 -0.6Z" fill="#fff"/><circle cx="-1.4" cy="-1.8" r="1.4" fill="#fbe7b0"/><circle cx="1.4" cy="-1.8" r="1.4" fill="#fbe7b0"/><circle cx="0" cy="-2.6" r="1.4" fill="#fff3d0"/></svg></span><br>
<span id="c2_3">— Что-то мне не хочется за такой ценник идти на все</span><br>
<span id="c2_4">подряд. Посмотрю в интернете через месяц. <svg class="em" role="img" aria-label="😒" width="8.1" height="8.1" viewBox="-4 -4 8 8"><circle r="3.6" fill="#f7c531"/><circle cx="-1.3" cy="-0.8" r="0.55" fill="#6b4a12"/><circle cx="1.3" cy="-0.8" r="0.55" fill="#6b4a12"/><path d="M-1.2 2 Q0 1.2 1.2 2" stroke="#6b4a12" stroke-width="0.6" fill="none"/></svg><svg class="em" role="img" aria-label="💰" width="8.1" height="8.1" viewBox="-4 -4 8 8"><path d="M-1.2 -3.4 H1.2 L0.8 -1.8 A3.4 3.2 0 1 1 -0.8 -1.8Z" fill="#c98a3c"/><text x="0" y="2.6" font-size="4" text-anchor="middle" fill="#f6e27a" font-family='"Liberation Sans", sans-serif' font-weight="bold">$</text></svg></span><br>
<span id="c2_5">— Вот эт ты и жмотяра! Ну и сиди дома, как сыч! <svg class="em" role="img" aria-label="😤" width="8.1" height="8.1" viewBox="-4 -4 8 8"><circle r="3.6" fill="#f7c531"/><path d="M-2.2 -1H-0.6M0.6 -1H2.2" stroke="#6b4a12" stroke-width="0.6"/><circle cx="-2.2" cy="1.8" r="1.3" fill="#fff"/><circle cx="2.2" cy="1.8" r="1.3" fill="#fff"/></svg><svg class="em" role="img" aria-label="🦉" width="8.1" height="8.1" viewBox="-4 -4 8 8"><rect x="-2.4" y="-3.4" width="4.8" height="7" rx="2" fill="#b07a44"/><circle cx="-1" cy="-1.4" r="1.1" fill="#fff"/><circle cx="1" cy="-1.4" r="1.1" fill="#fff"/><rect x="-1.3" y="0.6" width="2.6" height="2.6" rx="1" fill="#f1dcc0"/></svg></span><br>
<span id="c2_6">— Ну, если только вы за меня заплатите. <svg class="em" role="img" aria-label="😏" width="8.1" height="8.1" viewBox="-4 -4 8 8"><circle r="3.6" fill="#f7c531"/><circle cx="-1.3" cy="-0.8" r="0.55" fill="#6b4a12"/><circle cx="1.3" cy="-0.8" r="0.55" fill="#6b4a12"/><path d="M-0.8 1.8 Q0.6 2.2 1.6 1.2" stroke="#6b4a12" stroke-width="0.6" fill="none"/></svg><svg class="em" role="img" aria-label="💸" width="8.1" height="8.1" viewBox="-4 -4 8 8"><rect x="-3.4" y="-2" width="6.8" height="4" rx="0.6" fill="#7fb069" transform="rotate(-20)"/><path d="M-3 -3 L-1 -1.6M3 3 L1 1.6" stroke="#dfe8d8" stroke-width="1.2"/></svg></span><br>
<span id="c2_7">— Ага, разбежался! <svg class="em" role="img" aria-label="🏃" width="8.1" height="8.1" viewBox="-4 -4 8 8"><circle cx="0.6" cy="-2.8" r="0.9" fill="#f2c14a"/><path d="M0.4 -1.8 L-0.2 0.6M0.2 -1 L-1.8 -0.6M0.4 -1 L2 0" stroke="#e6b13c" stroke-width="0.9" fill="none"/><path d="M-0.2 0.6 L1.4 2 L1 3.8M-0.2 0.6 L-2 1.6 L-3 3.2" stroke="#3f6fb8" stroke-width="0.9" fill="none"/></svg><svg class="em" role="img" aria-label="💨" width="8.1" height="8.1" viewBox="-4 -4 8 8"><circle cx="0.8" cy="0" r="2.6" fill="#a9cdf0"/><circle cx="-1.8" cy="1.4" r="1.5" fill="#c5defa"/><circle cx="-2.6" cy="-1.4" r="0.9" fill="#c5defa"/></svg></span><br>
</div>
<div class="cb" style="left:133px" id="cp2">Копировать</div><div class="cb" style="left:172.8px" id="ps2">Вставить</div>
</div>
<div class="card" style="top:434.2px;height:116.7px">
<div class="lbl" id="l3">Вежливый</div>
<div class="ct" id="c3">
<span id="c3_0">— Сегодня состоится премьера того самого фильма, о</span><br>
<span id="c3_1">котором ты говорил на прошлой неделе. Не составит ли</span><br>
<span id="c3_2">тебе труда составить нам компанию в кино?</span><br>
<span id="c3_3">— К сожалению, мне не хотелось бы тратить такую</span><br>
<span id="c3_4">сумму на просмотр всех подряд фильмов. Я, пожалуй,</span><br>
<span id="c3_5">посмотрю его в интернете через месяц.</span><br>
<span id="c3_6">— Ну, ты и скупердяй! Ну и сиди дома, как сыч!</span><br>
<span id="c3_7">— Ну, если только вы за меня заплатите.</span><br>
<span id="c3_8">— Ага, разбежался!</span><br>
</div>
<div class="cb" style="left:133px" id="cp3">Копировать</div><div class="cb" style="left:172.8px" id="ps3">Вставить</div>
</div>
<svg style="position:absolute;left:343.30px;top:393.60px;overflow:visible" width="18" height="18" viewBox="-9.0 -9.0 18 18" ><circle r="8.6" fill="#262628"/><g transform="rotate(45)"><rect x="-0.9" y="-5.4" width="1.8" height="9" rx="0.5" fill="#8d8d8d"/><path d="M-0.9 3.8 L0 5.8 L0.9 3.8Z" fill="#8d8d8d"/></g></svg>
<div style="position:absolute;left:0;top:555.4px;width:361px;height:21px;background:#000"></div>
<svg style="position:absolute;left:7.30px;top:561.00px;overflow:visible" width="6" height="10" viewBox="-3.0 -5.0 6 10" ><rect x="-1.3" y="-3.6" width="2.6" height="5" rx="1.3" fill="#7a7a7a"/><path d="M-2.3 0 A2.3 2.3 0 0 0 2.3 0M0 2.3V3.8" fill="none" stroke="#7a7a7a" stroke-width="0.7"/></svg>
<svg style="position:absolute;left:245.00px;top:562.00px;overflow:visible" width="8" height="8" viewBox="-4.0 -4.0 8 8" ><path d="M-2.4 -2.8V2.8M0 -2.8V2.8M2.4 -2.8V2.8" stroke="#c8c8c8" stroke-width="0.75"/></svg>
<svg style="position:absolute;left:278.00px;top:562.00px;overflow:visible" width="8" height="8" viewBox="-4.0 -4.0 8 8" ><rect x="-3.1" y="-3.1" width="6.2" height="6.2" rx="1.9" fill="none" stroke="#c8c8c8" stroke-width="0.85"/></svg>
<svg style="position:absolute;left:312.00px;top:562.00px;overflow:visible" width="8" height="8" viewBox="-4.0 -4.0 8 8" ><path d="M-3.4 -1.6 L0 1.8 L3.4 -1.6" fill="none" stroke="#c8c8c8" stroke-width="0.85"/></svg>
</div>
</body></html>
